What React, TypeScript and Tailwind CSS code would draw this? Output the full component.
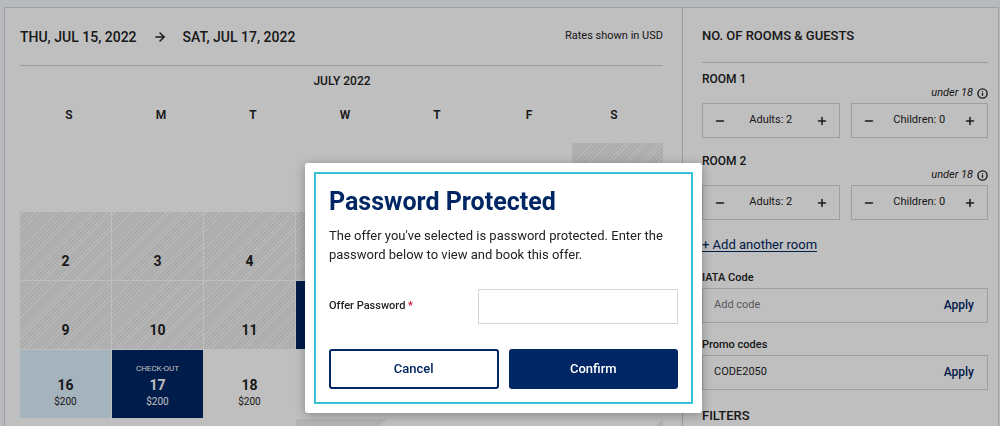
import React from 'react';
import { Plus, Minus, ArrowRight, Info } from 'lucide-react';

type DayStatus = 'open' | 'blocked' | 'range' | 'selected' | 'cut' | 'corner';

interface Day {
  date?: number;
  status: DayStatus;
  note?: string;
  rate?: string;
}

const weekdays = ['S', 'M', 'T', 'W', 'T', 'F', 'S'];

const blocked = (date?: number): Day => ({ date, status: 'blocked' });

const weeks: (Day | null)[][] = [
  [null, null, null, null, null, null, blocked()],
  [blocked(2), blocked(3), blocked(4), blocked(), blocked(), blocked(), blocked()],
  [
    blocked(9),
    blocked(10),
    blocked(11),
    { status: 'selected' },
    { status: 'range' },
    { status: 'range' },
    { status: 'range' },
  ],
  [
    { date: 16, status: 'range', rate: '$200' },
    { date: 17, status: 'selected', note: 'CHECK-OUT', rate: '$200' },
    { date: 18, status: 'open', rate: '$200' },
    null,
    null,
    null,
    null,
  ],
  [null, null, null, { status: 'cut' }, null, null, { status: 'corner' }],
];

const dayStyles: Record<DayStatus, string> = {
  open: '',
  blocked: 'bg-[repeating-linear-gradient(135deg,#e6e6e6_0px,#e6e6e6_2px,#fafafa_2px,#f4f4f4_3px)]',
  range: 'bg-[#ddeffc]',
  selected: 'bg-[#002663] text-white',
  cut: 'bg-[linear-gradient(135deg,#efefef_57%,transparent_57%)]',
  corner: 'bg-[linear-gradient(135deg,transparent_57%,#efefef_57%)]',
};

const DayCell: React.FC<{ day: Day }> = ({ day }) => (
  <div className={`flex h-[68px] flex-col items-center justify-end pb-[9px] ${dayStyles[day.status]}`}>
    {day.note && <span className="text-[8px] leading-3">{day.note}</span>}
    {day.date && <span className="text-sm leading-5 font-bold">{day.date}</span>}
    {day.rate && <span className="text-[10px] leading-[14px]">{day.rate}</span>}
  </div>
);

const Stepper: React.FC<{ label: string; value: number }> = ({ label, value }) => (
  <div className="flex h-[35px] flex-1 items-center justify-between border border-[#d3d5dc] px-[11px]">
    <button type="button" aria-label={`Fewer ${label}`}>
      <Minus size={12} strokeWidth={3} />
    </button>
    <span className="text-[11px]">
      {label}: {value}
    </span>
    <button type="button" aria-label={`More ${label}`}>
      <Plus size={12} strokeWidth={3} />
    </button>
  </div>
);

const Room: React.FC<{ index: number }> = ({ index }) => (
  <section className="mb-[15px]">
    <h3 className="text-xs leading-4 font-medium">ROOM {index}</h3>
    <p className="mb-[3px] flex h-[13px] items-center justify-end gap-1 text-[11px] italic">
      under 18 <Info size={11} strokeWidth={3} />
    </p>
    <div className="flex gap-[11px]">
      <Stepper label="Adults" value={2} />
      <Stepper label="Children" value={0} />
    </div>
  </section>
);

interface CodeFieldProps {
  id: string;
  label: string;
  value?: string;
}

const CodeField: React.FC<CodeFieldProps> = ({ id, label, value }) => (
  <div className="mb-[14px]">
    <label htmlFor={id} className="block h-[18px] text-[11px] leading-4 font-medium">
      {label}
    </label>
    <div className="flex h-[35px] items-center border border-[#d3d5dc] px-[11px]">
      <input
        id={id}
        defaultValue={value}
        placeholder="Add code"
        className="min-w-0 flex-1 text-[11px] outline-none placeholder:text-[#767780]"
      />
      <button type="button" className="pr-[2px] pb-px text-xs leading-4 font-medium text-[#002663]">
        Apply
      </button>
    </div>
  </div>
);

const Calendar: React.FC = () => (
  <main className="min-w-0 flex-1 pr-[18px] pl-[15px]">
    <header className="mr-px flex h-[58px] items-center justify-between border-b border-[#d0d0d3]">
      <div className="flex items-center gap-4 text-sm font-medium">
        <span>THU, JUL 15, 2022</span>
        <ArrowRight size={14} strokeWidth={2.5} />
        <span>SAT, JUL 17, 2022</span>
      </div>
      <span className="text-[11px]">Rates shown in USD</span>
    </header>
    <table className="w-full table-fixed border-collapse">
      <caption className="h-[30px] text-xs leading-[30px] font-medium">JULY 2022</caption>
      <thead>
        <tr className="h-[47px]">
          {weekdays.map((name, i) => (
            <th key={i} scope="col" className="p-0 pb-[9px] pl-[6px] text-xs font-semibold last:pr-[8px] last:pl-0">
              {name}
            </th>
          ))}
        </tr>
      </thead>
      <tbody>
        {weeks.map((week, i) => (
          <tr key={i} className="h-[69px]">
            {week.map((day, j) => (
              <td key={j} className="p-0 pr-px pb-px">
                {day && <DayCell day={day} />}
              </td>
            ))}
          </tr>
        ))}
      </tbody>
    </table>
  </main>
);

const Sidebar: React.FC = () => (
  <aside className="w-[316px] shrink-0 border-l border-[#d0d0d3] pr-[10px] pl-[19px]">
    <h2 className="mb-2 h-[55px] border-b border-[#d0d0d8] text-[13px] leading-[55px] font-medium">NO. OF ROOMS &amp; GUESTS</h2>
    <Room index={1} />
    <Room index={2} />
    <a href="#add-room" className="mb-[15px] block text-[13px] leading-5 text-[#002663] underline underline-offset-2">
      + Add another room
    </a>
    <CodeField id="iata" label="IATA Code" />
    <CodeField id="promo" label="Promo codes" value="CODE2050" />
    <h2 className="text-[13px] leading-6 font-medium">FILTERS</h2>
  </aside>
);

const PasswordDialog: React.FC = () => (
  <div className="fixed inset-0 flex items-start justify-center bg-black/25 pt-[163px] pl-[7px]">
    <div
      role="dialog"
      aria-labelledby="dialog-title"
      className="w-[397px] rounded-[3px] bg-white p-[9px] shadow-[0_2px_12px_rgba(0,0,0,0.3)]"
    >
      <form className="border-2 border-[#38c1d8] px-[13px] pt-3 pb-[13px]">
        <h1 id="dialog-title" className="text-[25px] leading-8 font-bold text-[#002663]">
          Password Protected
        </h1>
        <p className="mt-2 text-[13px] leading-[19px]">
          The offer you've selected is password protected. Enter the password below to view and book this offer.
        </p>
        <div className="mt-[25px] flex items-center justify-between">
          <label htmlFor="offer-password" className="text-[11px] font-medium">
            Offer Password <span className="text-[#c8102e]">*</span>
          </label>
          <input id="offer-password" type="password" className="h-[35px] w-[200px] border border-[#d3d5dc] px-2 outline-none" />
        </div>
        <div className="mt-[25px] grid grid-cols-2 gap-[10px] text-[13px] font-medium">
          <button type="button" className="h-10 rounded-[3px] border-2 border-[#002663] text-[#002663]">
            Cancel
          </button>
          <button type="button" className="h-10 rounded-[3px] bg-[#002663] text-white">
            Confirm
          </button>
        </div>
      </form>
    </div>
  </div>
);

export default function App() {
  return (
    <div className="h-screen overflow-hidden bg-[#f7f9fc] pt-[7px] pr-px pl-1 font-[Roboto,sans-serif] text-[#222]">
      <div className="flex min-h-full border border-[#d3d5d8] bg-white">
        <Calendar />
        <Sidebar />
      </div>
      <PasswordDialog />
    </div>
  );
}
